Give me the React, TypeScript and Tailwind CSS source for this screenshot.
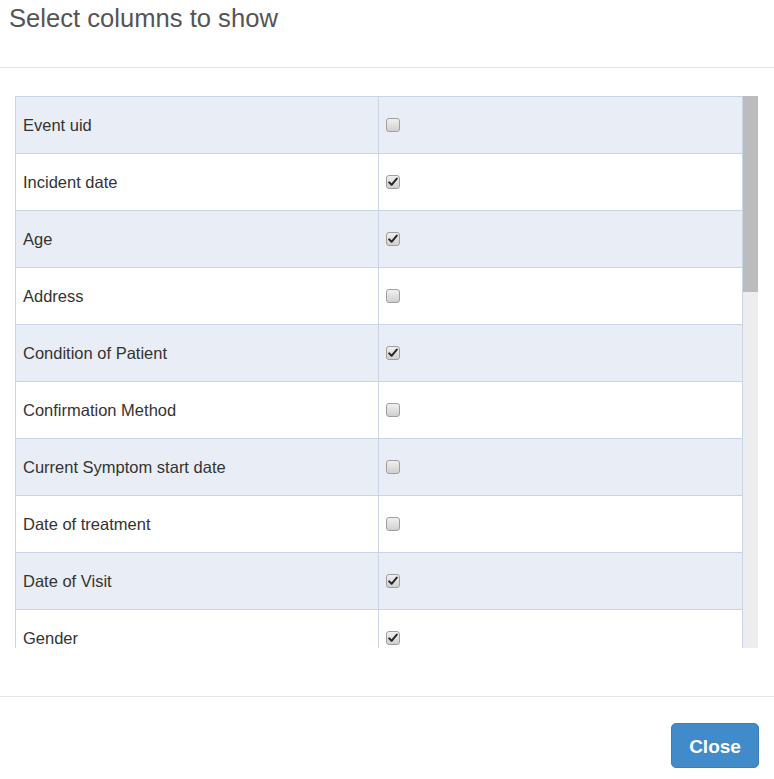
import React from "react";

const rows: [string, boolean][] = [
  ["Event uid", false],
  ["Incident date", true],
  ["Age", true],
  ["Address", false],
  ["Condition of Patient", true],
  ["Confirmation Method", false],
  ["Current Symptom start date", false],
  ["Date of treatment", false],
  ["Date of Visit", true],
  ["Gender", true],
];

function Check({ checked }: { checked: boolean }) {
  return (
    <div className="w-[14px] h-[14px] rounded-[3px] border border-[#9f9f9f] bg-gradient-to-b from-[#f0f0f0] to-[#d0d0d0] flex items-center justify-center">
      {checked && (
        <svg width="10" height="10" viewBox="0 0 10 10">
          <path d="M1.2 5.4 L3.6 7.8 L8.8 1.6" fill="none" stroke="#262626" strokeWidth="2" strokeLinecap="round" strokeLinejoin="round" />
        </svg>
      )}
    </div>
  );
}

export default function App() {
  return (
    <div className="w-[774px] h-[779px] bg-white flex flex-col" style={{ fontFamily: '"Liberation Sans", Arial, sans-serif' }}>
      <div className="h-[68px] border-b border-[#e5e5e5] pl-[9px] pt-[4px] shrink-0">
        <div className="text-[25.6px] leading-[28px] text-[#555]">Select columns to show</div>
      </div>
      <div className="pt-[28px] pl-[15px] pr-[16px] shrink-0">
        <div className="flex h-[552px] overflow-hidden">
          <div className="flex-1 border-t border-l border-r border-[#c9d5e7] overflow-hidden">
            {rows.map(([label, checked], i) => (
              <div
                key={label}
                className={`flex h-[57px] shrink-0 border-b border-[#c9d5e7] ${i % 2 === 0 ? "bg-[#e9eef6]" : "bg-white"}`}
              >
                <div className="w-[363px] border-r border-[#c9d5e7] flex items-center pl-[7px] pt-[1px] text-[16.5px] text-[#333]">
                  {label}
                </div>
                <div className="flex-1 flex items-center pl-[7px]">
                  <Check checked={checked} />
                </div>
              </div>
            ))}
          </div>
          <div className="w-[15px] flex flex-col bg-[#ededed]">
            <div className="h-[196px] bg-[#bcbcbc]" />
          </div>
        </div>
      </div>
      <div className="mt-[48px] border-t border-[#e5e5e5] flex justify-end pr-[15px] pt-[26px]">
        <button className="w-[88px] h-[45px] rounded-[5px] bg-[#428bca] border border-[#3a80bf] text-white font-bold text-[19px] pt-[3px]">
          Close
        </button>
      </div>
    </div>
  );
}
